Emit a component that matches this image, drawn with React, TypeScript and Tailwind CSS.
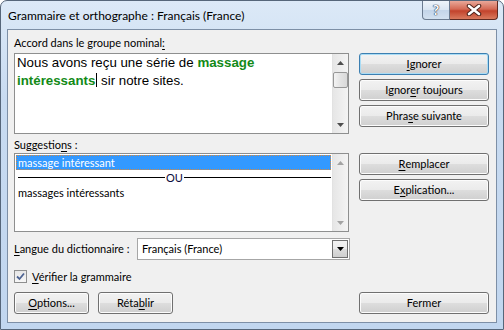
import React from "react";

const btnBase =
  "flex h-[22px] items-center justify-center rounded-[3px] border text-black bg-[linear-gradient(to_bottom,#f2f2f2,#ebebeb_48%,#dddddd_52%,#cfcfcf)]";

function Btn({
  children,
  className = "",
  focused = false,
}: {
  children: React.ReactNode;
  className?: string;
  focused?: boolean;
}) {
  return (
    <div
      className={
        btnBase +
        " " +
        (focused
          ? "border-[#3c7fb1] shadow-[inset_0_0_0_1px_#a9dcf5]"
          : "border-[#707070] shadow-[inset_0_0_0_1px_#fcfcfc]") +
        " " +
        className
      }
    >
      {children}
    </div>
  );
}

const U = ({ children }: { children: React.ReactNode }) => (
  <span className="underline underline-offset-[2px]">{children}</span>
);

const Arrow = ({ up, color }: { up?: boolean; color: string }) => (
  <svg width="7" height="4" viewBox="0 0 7 4">
    <path d={up ? "M3.5 0 L7 4 L0 4 Z" : "M0 0 L7 0 L3.5 4 Z"} fill={color} />
  </svg>
);

// vertical scrollbar used by the text box and the suggestion list
function ScrollBar({ thumb, disabled }: { thumb?: boolean; disabled?: boolean }) {
  const c = disabled ? "#a3a3a3" : "#4d4d4d";
  return (
    <div className="flex w-[16px] flex-col items-center border-l border-[#e2e2e2] bg-[linear-gradient(to_right,#e6e6e6,#f4f4f4)]">
      <div className="flex h-[17px] w-full items-center justify-center">
        <Arrow up color={c} />
      </div>
      {thumb && (
        <div className="mt-[1px] h-[16px] w-[15px] rounded-[2px] border border-[#979797] bg-[linear-gradient(to_right,#f3f3f3,#e3e3e3_50%,#d9d9d9)]" />
      )}
      <div className="flex-1" />
      <div className="flex h-[17px] w-full items-center justify-center">
        <Arrow color={c} />
      </div>
    </div>
  );
}

export default function App() {
  return (
    <div className="h-[330px] w-[504px] bg-white font-['Lato',sans-serif] text-[11px] text-black">
      <div className="flex h-full w-full flex-col rounded-t-[7px] border border-[#56667a] bg-[linear-gradient(to_bottom,#dce9f7,#c8dbf1_30%,#c1d6ef)]">
        {/* Title bar */}
        <div className="flex h-[28px] items-start">
          <span className="ml-[7px] mt-[8px] text-[12px] leading-[14px] text-black">
            Grammaire et orthographe : Français (France)
          </span>
          <div className="ml-auto mr-[5px] flex">
            <div className="flex h-[19px] w-[28px] items-center justify-center rounded-bl-[4px] border border-t-0 border-[#6b7b90] bg-[linear-gradient(to_bottom,#eef4fa,#d9e5f2_50%,#c4d5e9_52%,#d3e1f0)]">
              <span className="text-[14px] font-bold leading-none text-white [text-shadow:0_0_1px_#2b3a4f,0_0_1px_#2b3a4f,0_0_1px_#2b3a4f]">
                ?
              </span>
            </div>
            <div className="flex h-[19px] w-[48px] items-center justify-center rounded-br-[4px] border border-l-0 border-t-0 border-[#5e2a22] bg-[linear-gradient(to_bottom,#e9a899,#d46a55_45%,#c2432c_55%,#d97a5e)]">
              <svg width="16" height="12" viewBox="0 0 16 12">
                <path d="M3 2 L13 10 M13 2 L3 10" stroke="#4a2018" strokeWidth="4.5" strokeLinecap="round" />
                <path d="M3 2 L13 10 M13 2 L3 10" stroke="#ffffff" strokeWidth="2.6" strokeLinecap="round" />
              </svg>
            </div>
          </div>
        </div>

        {/* Client area */}
        <div className="mx-[6px] mb-[6px] flex flex-1 flex-col border border-[#7d8fa6] bg-[#f0f0f0] pl-[6px] pr-[7px]">
          {/* Sentence + first buttons */}
          <div className="flex">
            <div className="flex w-[335px] flex-col">
              <div className="mt-[5px] h-[16px] leading-[16px]">
                Accord dans le groupe nominal<U>:</U>
              </div>
              <div className="mt-[2px] flex h-[81px] border border-[#8e8f8f] bg-white">
                <div className="flex-1 px-[2px] pt-[1px] font-['Liberation_Sans',Arial,sans-serif] text-[13.3px] leading-[16px]">
                  Nous avons reçu une série de{" "}
                  <b className="text-[#138a17]">massage</b>
                  <br />
                  <b className="text-[#138a17]">intéressants</b>
                  <span className="ml-px inline-block h-[14px] w-px translate-y-[2px] bg-black" /> sir notre sites.
                </div>
                <ScrollBar thumb />
              </div>
            </div>
            <div className="ml-[10px] flex w-[130px] flex-col gap-[4px] pt-[23px]">
              <Btn focused>
                <U>I</U>gnorer
              </Btn>
              <Btn>
                Ignor<U>e</U>r toujours
              </Btn>
              <Btn>
                Phra<U>s</U>e suivante
              </Btn>
            </div>
          </div>

          {/* Suggestions */}
          <div className="mt-[3px] flex">
            <div className="flex w-[335px] flex-col">
              <div className="h-[16px] leading-[16px]">
                Suggestio<U>n</U>s :
              </div>
              <div className="flex h-[79px] border border-[#8e8f8f] bg-white">
                <div className="flex flex-1 flex-col pl-[1px] pr-[1px] pt-[1px]">
                  <div className="flex h-[15px] items-center border border-dotted border-[#d9893b] bg-[#3399ff] px-px leading-none text-white">
                    massage intéressant
                  </div>
                  <div className="flex h-[15px] items-center pl-[2px]">
                    <div className="h-px flex-1 bg-black" />
                    <span className="px-[1px] leading-none text-[#0c0c3c]">OU</span>
                    <div className="h-px flex-1 bg-black" />
                  </div>
                  <div className="flex h-[15px] items-center pl-[2px] leading-none">
                    massages intéressants
                  </div>
                </div>
                <ScrollBar disabled />
              </div>
            </div>
            <div className="ml-[10px] flex w-[130px] flex-col gap-[4px] pt-[16px]">
              <Btn>
                <U>R</U>emplacer
              </Btn>
              <Btn>
                E<U>x</U>plication...
              </Btn>
            </div>
          </div>

          {/* Dictionary language */}
          <div className="mt-[6px] flex h-[22px] items-center">
            <span className="w-[123px] whitespace-nowrap">
              <U>L</U>angue du dictionnaire :
            </span>
            <div className="flex h-[22px] w-[213px] items-center border border-[#a6a6a6] bg-white">
              <span className="flex-1 pl-[4px]">Français (France)</span>
              <div className="mr-px flex h-[18px] w-[16px] items-center justify-center border border-[#707070] bg-[linear-gradient(to_bottom,#f2f2f2,#ebebeb_48%,#dddddd_52%,#cfcfcf)]">
                <Arrow color="#000000" />
              </div>
            </div>
          </div>

          {/* Grammar checkbox */}
          <div className="mt-[10px] flex h-[13px] items-center">
            <div className="flex h-[13px] w-[13px] items-center justify-center border border-[#8e8f8f] bg-[linear-gradient(to_bottom,#e6e6e6,#f7f7f7)]">
              <svg width="9" height="9" viewBox="0 0 9 9">
                <path d="M1 4.5 L3.5 7 L8 1.5" stroke="#4d6392" strokeWidth="1.8" fill="none" />
              </svg>
            </div>
            <span className="ml-[5px] leading-none">
              <U>V</U>érifier la grammaire
            </span>
          </div>

          {/* Bottom buttons */}
          <div className="mt-[9px] flex">
            <Btn className="w-[75px]">
              <U>O</U>ptions...
            </Btn>
            <Btn className="ml-[9px] w-[75px]">
              Réta<U>b</U>lir
            </Btn>
            <Btn className="ml-auto w-[130px]">Fermer</Btn>
          </div>
        </div>
      </div>
    </div>
  );
}
